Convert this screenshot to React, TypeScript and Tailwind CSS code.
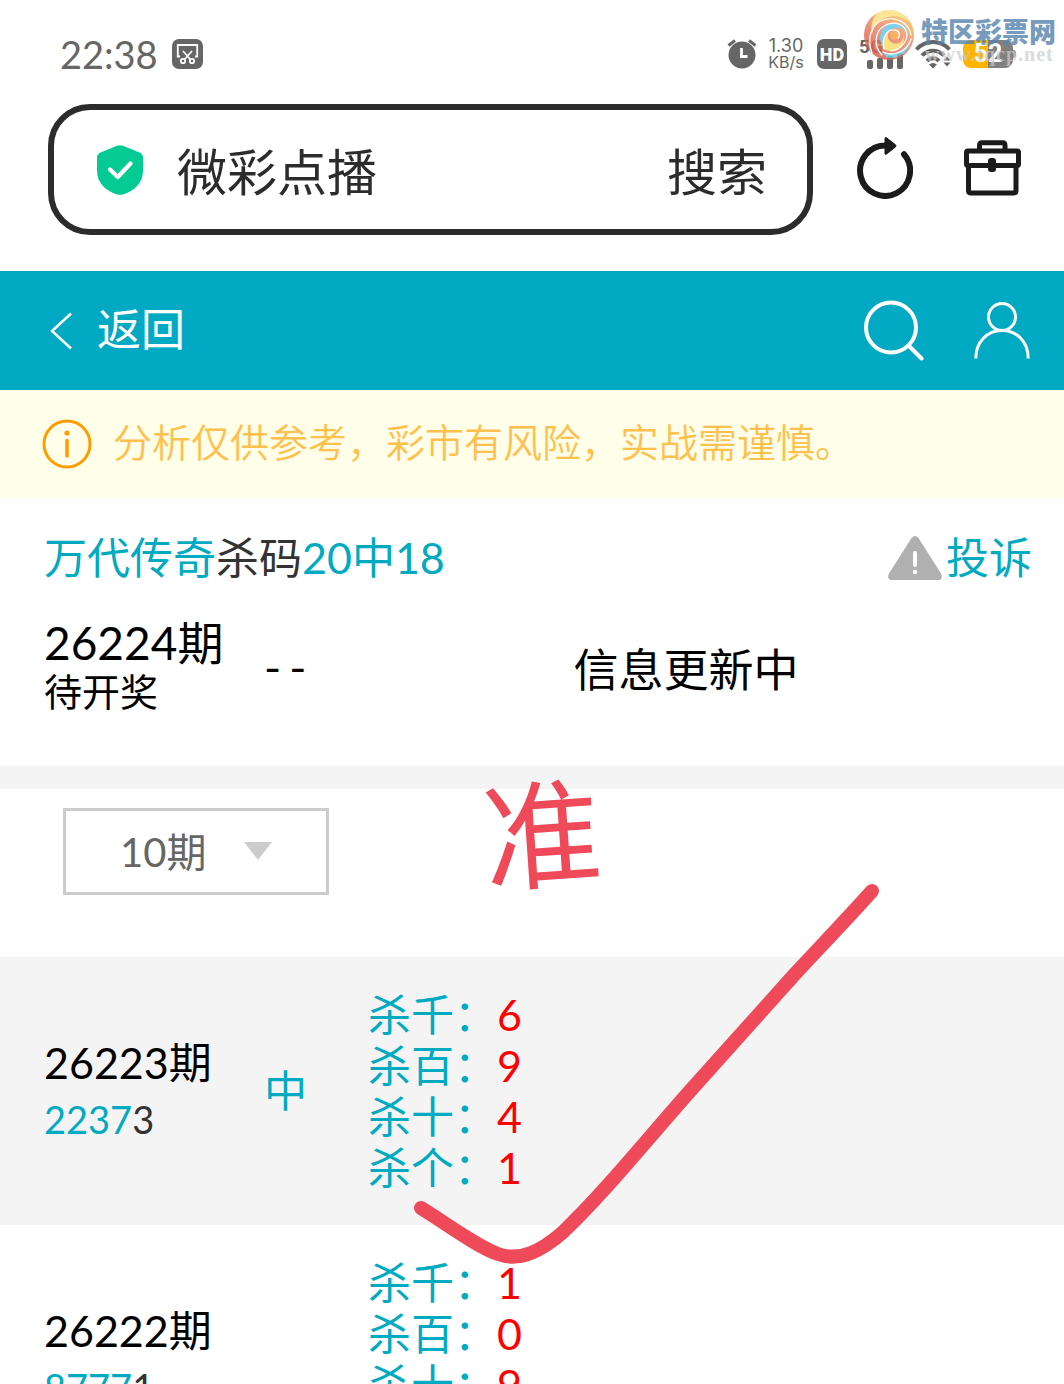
import React from 'react';

const FONT = "font-['Lato','Noto_Sans_CJK_SC',sans-serif]";

type Kill = { label: string; digit: string };
type Draw = { issue: string; hit: string; rest: string; result: string; kills: Kill[] };

const DRAWS: Draw[] = [
  {
    issue: '26223期',
    hit: '2237',
    rest: '3',
    result: '中',
    kills: [
      { label: '杀千：', digit: '6' },
      { label: '杀百：', digit: '9' },
      { label: '杀十：', digit: '4' },
      { label: '杀个：', digit: '1' },
    ],
  },
  {
    issue: '26222期',
    hit: '8777',
    rest: '1',
    result: '',
    kills: [
      { label: '杀千：', digit: '1' },
      { label: '杀百：', digit: '0' },
      { label: '杀十：', digit: '9' },
    ],
  },
];

const ScreenshotIcon = () => (
  <svg className="h-[30px] w-[31px]" viewBox="0 0 31 30" fill="none">
    <rect width="31" height="30" rx="7" fill="#666" />
    <g stroke="#fff" strokeWidth="1.800">
      <path d="M8 17.500H5.800V6H25.200V17.500H23" />
      <path d="M11 12L18.500 20.500M20 12L12.500 20.500" />
      <circle cx="11" cy="22" r="2.200" />
      <circle cx="20" cy="22" r="2.200" />
    </g>
  </svg>
);

const AlarmIcon = () => (
  <svg className="h-[30px] w-[30px]" viewBox="0 0 30 30" fill="none">
    <circle cx="15" cy="16" r="13.500" fill="#666" />
    <path d="M1.500 6.500L8 1.500M28.500 6.500L22 1.500" stroke="#666" strokeWidth="3" />
    <path d="M14.500 9V17.500H20.500" stroke="#fff" strokeWidth="2.800" />
  </svg>
);

const SignalIcon = () => (
  <svg className="h-[16px] w-[36px]" viewBox="0 0 36 16" fill="#666">
    <rect x="0" y="7" width="6" height="9" rx="2" />
    <rect x="10" y="5" width="6" height="11" rx="2" />
    <rect x="20" y="3" width="6" height="13" rx="2" />
    <rect x="30" y="0" width="6" height="16" rx="2" />
  </svg>
);

const WifiIcon = () => (
  <svg className="h-[30px] w-[36px]" viewBox="0 0 36 30" fill="none" stroke="#666" strokeWidth="4">
    <path d="M1.500 10.500C10.500 0.500 25.500 0.500 34.500 10.500" />
    <path d="M7 16.500C13 10 23 10 29 16.500" />
    <path d="M12 22C15.500 18.300 20.500 18.300 24 22" />
    <path d="M14 25.500L18 29.500L22 25.500Q18 22.500 14 25.500Z" fill="#666" stroke="none" />
    <path d="M28.500 21.500L32 17.500L35.500 21.500ZM28.500 23.500L32 27.500L35.500 23.500Z" fill="#666" stroke="none" />
  </svg>
);

const ShieldIcon = () => (
  <svg className="h-[50px] w-[46px] shrink-0" viewBox="0 0 46 50" fill="none">
    <path d="M20 0.800Q23 -0.400 26 0.800L42.500 7.500Q46 9 46 12.500V26C46 38 37 46 26 49.400Q23 50.300 20 49.400C9 46 0 38 0 26V12.500Q0 9 3.500 7.500Z" fill="#04cb94" />
    <path d="M13 24.500L20.800 32L33.500 18.500" stroke="#fff" strokeWidth="4.200" strokeLinecap="round" strokeLinejoin="round" />
  </svg>
);

const ReloadIcon = () => (
  <svg className="h-[62px] w-[56px]" viewBox="0 0 56 62" fill="none">
    <path d="M28 8.500A25 25.200 0 1 0 47 17.200" stroke="#1b1b1b" strokeWidth="6" strokeLinecap="round" />
    <path d="M28 1.500Q28 0 29.500 0.800L38.500 7.800Q39.500 9 38.500 10L29.500 17Q28 18 28 16.500Z" fill="#1b1b1b" stroke="#1b1b1b" />
  </svg>
);

const ToolboxIcon = () => (
  <svg className="h-[56px] w-[57px]" viewBox="0 0 57 56" fill="none" stroke="#1b1b1b" strokeWidth="5" strokeLinejoin="round">
    <path d="M15.500 11V5.500Q15.500 2.800 18 2.800H38.500Q41 2.800 41 5.500V11" />
    <rect x="2.500" y="11" width="52" height="14.500" rx="1.500" />
    <path d="M4.500 25V50.500Q4.500 53 7 53H49.500Q52 53 52 50.500V25" />
    <rect x="24" y="18" width="8" height="14" rx="3" fill="#1b1b1b" stroke="none" />
  </svg>
);

const BackIcon = () => (
  <svg className="h-[38px] w-[22px]" viewBox="0 0 22 38" fill="none" stroke="#fff" strokeWidth="2.500">
    <path d="M21 1.500L2 19L21 36.500" />
  </svg>
);

const SearchIcon = () => (
  <svg className="h-[62px] w-[60px]" viewBox="0 0 60 62" fill="none" stroke="#fff" strokeWidth="4" strokeLinecap="round">
    <circle cx="27" cy="27.500" r="25" />
    <path d="M45 46L57.500 58.500" />
  </svg>
);

const UserIcon = () => (
  <svg className="h-[58px] w-[56px]" viewBox="0 0 56 58" fill="none" stroke="#fff" strokeWidth="3">
    <circle cx="28" cy="15" r="13.500" />
    <path d="M1.800 56.500C1.800 40 13 28.500 28 28.500S54.200 40 54.200 56.500" />
  </svg>
);

const InfoIcon = () => (
  <svg className="h-[50px] w-[50px] shrink-0" viewBox="0 0 50 50" fill="none" stroke="#ff9d00">
    <circle cx="25" cy="25" r="23" strokeWidth="3" />
    <path d="M25 21.500V37" strokeWidth="3.500" strokeLinecap="round" />
    <circle cx="25" cy="14" r="2.600" fill="#ff9d00" stroke="none" />
  </svg>
);

const WarnIcon = () => (
  <svg className="h-[44px] w-[54px]" viewBox="0 0 54 44" fill="none">
    <path d="M23.500 2Q27 -2 30.500 2L53 37.500Q55.500 43 50.500 44H3.500Q-1.500 43 1 37.500Z" fill="#b0b0b0" />
    <path d="M27 17V29" stroke="#fff" strokeWidth="4" strokeLinecap="round" />
    <circle cx="27" cy="36" r="2.200" fill="#fff" />
  </svg>
);

const SwirlLogo = () => (
  <svg className="h-[52px] w-[52px]" viewBox="0 0 52 52" fill="none">
    <defs>
      <linearGradient id="ball" x1="0.800" y1="0" x2="0.200" y2="1">
        <stop offset="0" stopColor="#fbd050" />
        <stop offset="0.400" stopColor="#f08a68" />
        <stop offset="1" stopColor="#cf5040" />
      </linearGradient>
      <clipPath id="ball-clip">
        <circle cx="26" cy="26" r="25" />
      </clipPath>
    </defs>
    <g clipPath="url(#ball-clip)" opacity="0.820">
      <rect width="52" height="52" fill="url(#ball)" />
      <path d="M18 2C28 -1 42 3 46 13C38 6 27 6 20 10C14 13 10 19 9 25C7 14 11 5 18 2Z" fill="#fbe27c" />
      <path d="M21 40C15 32 16 22 23 17C31 11 43 14 45 25C42 20 34 16 27 21C21 25 19 32 21 40Z" fill="#62c6e8" />
      <path d="M21 40C19 32 21 25 27 21C23 27 25 32 30 34C36 36 41 32 40 26C43 34 37 42 30 42C26 42 23 42 21 40Z" fill="#f8dc68" />
      <path d="M20 43C32 48 44 42 48 30C47 42 37 50 24 49Z" fill="#6ccbe6" />
      <circle cx="32" cy="26" r="5" fill="#f6a040" />
    </g>
    <g stroke="#fff" strokeWidth="1.300" strokeLinecap="round">
      <path d="M9 44C3 29 9 15 20 11C32 7 46 13 48 26" />
      <path d="M19 46C10 37 12 22 21 17C31 11 43 15 44 26C43 35 36 41 28 42" />
      <path d="M21 40C18 28 25 20 31 21C36 21 38 26 35 29" />
      <path d="M20 43C32 48 44 42 48 30" />
    </g>
  </svg>
);

const StatusBar = () => (
  <div className="flex h-[104px] items-center justify-between pr-12 pl-[60px] text-[#666]">
    <div className="flex items-center gap-[14px] pt-1">
      <span className="text-[38px] leading-[44px]">22:38</span>
      <ScreenshotIcon />
    </div>
    <div className="flex items-center pt-1">
      <AlarmIcon />
      <div className="ml-[10px] w-[38px] text-center font-['Inter'] text-[18px] leading-[16px]">
        <div>1.30</div>
        <div className="text-[16px]">KB/s</div>
      </div>
      <div className="ml-3 flex h-[30px] w-[30px] items-center justify-center rounded-[7px] bg-[#666] font-['Roboto'] text-[18px] font-black text-white">
        HD
      </div>
      <div className="ml-3 flex h-[30px] flex-col justify-between">
        <span className="h-[12px] font-['Roboto'] text-[19px] leading-[16px] font-bold">5G</span>
        <span className="flex pl-2">
          <SignalIcon />
        </span>
      </div>
      <span className="ml-3">
        <WifiIcon />
      </span>
      <div className="ml-3 flex items-center">
        <div className="flex h-[28px] w-[50px] items-center justify-center rounded-[8px] bg-linear-to-r from-[#ffb400] from-50% to-[#808080] to-50% font-['Roboto'] text-[25px] font-bold text-white">
          52
        </div>
        <div className="h-2 w-[3px] rounded-r bg-[#808080]" />
      </div>
    </div>
  </div>
);

const Watermark = () => (
  <div className="pointer-events-none absolute top-[9px] right-[8px] flex">
    <SwirlLogo />
    <div className="ml-[6px] pt-[6px]">
      <div className="font-['Noto_Sans_CJK_SC',sans-serif] text-[27px] leading-[32px] font-black text-[#5483ad] opacity-80">特区彩票网</div>
      <div className="-mt-[2px] pl-1 font-['Liberation_Serif',serif] text-[20px] leading-[18px] font-bold tracking-wider text-[#ccc] opacity-70">
        www.tqcp.net
      </div>
    </div>
  </div>
);

const BrowserBar = () => (
  <div className="flex items-center pr-[43px] pb-9 pl-12">
    <form className="flex h-[131px] min-w-0 flex-1 items-center rounded-[42px] border-6 border-[#2c2c2c] pr-10 pl-[43px]">
      <ShieldIcon />
      <input
        aria-label="网址"
        defaultValue="微彩点播"
        className="ml-[34px] min-w-0 flex-1 bg-transparent pt-1 text-[50px] leading-[60px] text-[#2c2c2c] outline-none"
      />
      <button type="button" className="pt-1 text-[50px] leading-[60px] text-[#2c2c2c]">
        搜索
      </button>
    </form>
    <button type="button" aria-label="刷新" className="mb-1 ml-11">
      <ReloadIcon />
    </button>
    <button type="button" aria-label="工具箱" className="mb-1 ml-[51px]">
      <ToolboxIcon />
    </button>
  </div>
);

const SiteHeader = () => (
  <header className="flex h-[119px] items-center justify-between bg-[#02a9c3] pr-[34px] pl-[50px] text-white">
    <a href="#" className="flex items-center gap-[25px] text-[44px] leading-[50px]">
      <BackIcon />
      <span className="pb-1">返回</span>
    </a>
    <div className="flex items-center gap-[50px]">
      <button type="button" aria-label="搜索">
        <SearchIcon />
      </button>
      <button type="button" aria-label="我的">
        <UserIcon />
      </button>
    </div>
  </header>
);

const DrawRow = ({ draw }: { draw: Draw }) => (
  <tr className="h-[268px] odd:bg-[#f4f4f4]">
    <td className="w-[264px] pl-11 leading-[57px]">
      <div className="text-[43px] text-black">{draw.issue}</div>
      <div className="text-[38px] text-[#333]">
        <span className="text-[#00abc2]">{draw.hit}</span>
        {draw.rest}
      </div>
    </td>
    <td className="w-[104px] text-[43px] text-[#00abc2]">{draw.result}</td>
    <td className="py-8 align-top text-[43px] leading-[51px] text-[#00abc2]">
      {draw.kills.map((kill) => (
        <div key={kill.label}>
          {kill.label}
          <span className="text-[red]">{kill.digit}</span>
        </div>
      ))}
    </td>
  </tr>
);

// Hand-drawn red notes lying over the list
const Annotations = () => (
  <>
    <div className="pointer-events-none absolute top-[276px] left-[483px] -rotate-4 text-[118px] leading-[120px] text-[#ef4a59]">准</div>
    <svg className="pointer-events-none absolute top-[382px] left-[410px] h-[390px] w-[475px]" viewBox="410 880 475 390" fill="none">
      <path
        d="M421 1208C450 1226 478 1247 498 1254C520 1262 541 1251 562 1233C604 1193 644 1143 690 1091C726 1051 760 1013 794 975C820 947 846 920 872 891"
        stroke="#ef4a59"
        strokeWidth="14"
        strokeLinecap="round"
      />
    </svg>
  </>
);

const App: React.FC = () => {
  return (
    <div lang="zh-CN" className={`relative h-screen overflow-hidden bg-white ${FONT}`}>
      <StatusBar />
      <Watermark />
      <BrowserBar />
      <SiteHeader />
      <div className="flex h-[108px] items-center bg-[#ffffe9] pl-[42px] text-[39px] text-[#ffc04d]">
        <InfoIcon />
        <p className="ml-[21px] pb-1 font-[350] whitespace-nowrap">分析仅供参考，彩市有风险，实战需谨慎。</p>
      </div>
      <main className="relative">
        <section className="h-[268px] pt-[34px] pr-8 pl-11">
          <div className="flex items-center justify-between text-[43px] leading-[52px] text-[#00abc2]">
            <h1>
              万代传奇<span className="text-[#333]">杀码</span>20中18
            </h1>
            <a href="#" className="flex items-center gap-1">
              <WarnIcon />
              投诉
            </a>
          </div>
          <div className="mt-[34px] flex items-center text-black">
            <div className="w-[216px] leading-[49px]">
              <div className="text-[46px]">26224期</div>
              <div className="text-[38px]">待开奖</div>
            </div>
            <div className="w-[108px] pt-2 font-['Liberation_Mono',monospace] text-[42px]">--</div>
            <div className="flex-1 pt-2 pr-7 text-center text-[45px]">信息更新中</div>
          </div>
        </section>
        <div className="h-[23px] bg-[#f4f4f4]" />
        <div className="h-[168px] pt-[19px] pl-[63px]">
          <div className="relative w-[266px]">
            <select
              aria-label="期数"
              className="h-[87px] w-full appearance-none border-3 border-[#ccc] bg-white pl-[54px] text-[40px] text-[#666] outline-none"
            >
              <option>10期</option>
            </select>
            <svg className="pointer-events-none absolute top-[34px] right-[57px] h-[18px] w-[28px]" viewBox="0 0 28 18">
              <path d="M0 0H28L14 18Z" fill="#ccc" />
            </svg>
          </div>
        </div>
        <table className="w-full table-fixed border-collapse">
          <tbody>
            {DRAWS.map((draw) => (
              <DrawRow key={draw.issue} draw={draw} />
            ))}
          </tbody>
        </table>
        <Annotations />
      </main>
    </div>
  );
};

export default App;
